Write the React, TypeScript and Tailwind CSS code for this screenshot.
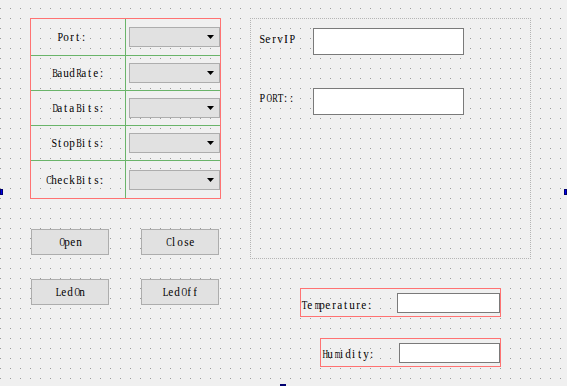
import React from 'react';

const serialRows = [
  { label: 'Port:  ', h: 'h-[36px]', first: true },
  { label: 'BaudRate:', h: 'h-[35px]' },
  { label: 'DataBits:', h: 'h-[35px]' },
  { label: 'StopBits:', h: 'h-[35px]' },
  { label: 'CheckBits: ', h: 'h-[38px]' },
];

// Times advance widths (per 1000 em) for the glyphs used here
const widths: Record<string, number> = {
  m: 778, w: 722, A: 722, B: 667, C: 667, D: 722, H: 722, O: 722, R: 667,
  E: 611, L: 611, T: 611, P: 556, S: 556, V: 722, I: 333,
};

// SimSun-like half-width text: every glyph squeezed into a 6px cell
const Txt = ({ s, className = '' }: { s: string; className?: string }) => (
  <span className={`whitespace-pre ${className}`}>
    {s.split('').map((c, i) => {
      const w = ((widths[c] ?? 500) * 12) / 1000;
      const k = Math.min(1, 5.6 / w);
      return (
        <span key={i} className="inline-block w-[6px] text-center">
          <span className="inline-block origin-center" style={{ transform: `scaleX(${k})` }}>
            {c}
          </span>
        </span>
      );
    })}
  </span>
);

const ComboBox = () => (
  <div className="w-[91px] h-[20px] bg-[#e1e1e1] border border-[#adadad] flex items-center justify-end pr-[5px]">
    <svg width="7" height="4" viewBox="0 0 7 4">
      <polygon points="0,0 7,0 3.5,4" fill="#000" />
    </svg>
  </div>
);

const Button = ({ text }: { text: string }) => (
  <div className="w-[78px] h-[26px] bg-[#e1e1e1] border border-[#adadad] flex items-center justify-center">
    <Txt s={text} />
  </div>
);

const LineEdit = ({ w, h }: { w: string; h: string }) => (
  <div className={`${w} ${h} bg-white border border-[#7a7a7a]`} />
);

const Handle = ({ pos }: { pos: string }) => (
  <div className={`absolute ${pos} bg-[#0000f0] border border-[#000070]`} />
);

export default function App() {
  return (
    <div className="relative w-[567px] h-[386px] overflow-hidden bg-[#f0f0f0] text-black [font-family:'Liberation_Serif','Noto_Sans_CJK_SC',serif] text-[12px] leading-[12px]">
      {/* designer grid */}
      <svg className="absolute inset-0" width="567" height="386">
        <defs>
          <pattern id="dots" x="0" y="8" width="10" height="10" patternUnits="userSpaceOnUse">
            <rect width="1" height="1" fill="#9a9a9a" />
          </pattern>
        </defs>
        <rect width="567" height="386" fill="url(#dots)" />
      </svg>

      {/* serial settings + buttons */}
      <div className="absolute left-[30px] top-[18px] flex flex-col">
        <div className="w-[191px] border border-[#ff7272]">
          {serialRows.map((r) => (
            <div key={r.label} className={`flex ${r.h} ${r.first ? '' : 'border-t border-[#6ab46a]'}`}>
              <div className="w-[95px] border-r border-[#6ab46a] flex items-center justify-center">
                <Txt s={r.label} />
              </div>
              <div className="pl-[3px] flex items-center">
                <ComboBox />
              </div>
            </div>
          ))}
        </div>
        <div className="ml-[1px] mt-[30px] flex flex-col gap-[24px]">
          <div className="flex gap-[32px]">
            <Button text="Open" />
            <Button text="Close" />
          </div>
          <div className="flex gap-[32px]">
            <Button text="LedOn" />
            <Button text="LedOff" />
          </div>
        </div>
      </div>

      {/* network settings */}
      <div className="absolute left-[250px] top-[18px] w-[281px] h-[241px] border border-dotted border-[#b4b4b4] pl-[62px] pt-[9px] flex flex-col gap-[33px]">
        <div className="relative">
          <Txt s="ServIP" className="absolute left-[-54px] top-[5px]" />
          <LineEdit w="w-[151px]" h="h-[27px]" />
        </div>
        <div className="relative">
          <Txt s="PORT::" className="absolute left-[-54px] top-[4px]" />
          <LineEdit w="w-[151px]" h="h-[27px]" />
        </div>
      </div>

      {/* sensor readouts */}
      <div className="absolute left-[300px] top-[288px] flex flex-col items-end gap-[21px]">
        <div className="w-[201px] h-[29px] border border-[#ff7272] flex items-center justify-between">
          <Txt s="Temperature:" className="mt-[4px]" />
          <LineEdit w="w-[103px]" h="h-[20px]" />
        </div>
        <div className="w-[181px] h-[29px] border border-[#ff7272] flex items-center justify-between">
          <Txt s="Humidity:" className="mt-[2px]" />
          <LineEdit w="w-[101px]" h="h-[20px]" />
        </div>
      </div>

      <Handle pos="left-0 top-[189px] w-[3px] h-[6px]" />
      <Handle pos="right-0 top-[189px] w-[3px] h-[6px]" />
      <Handle pos="left-[280px] bottom-0 w-[6px] h-[2px]" />
    </div>
  );
}
